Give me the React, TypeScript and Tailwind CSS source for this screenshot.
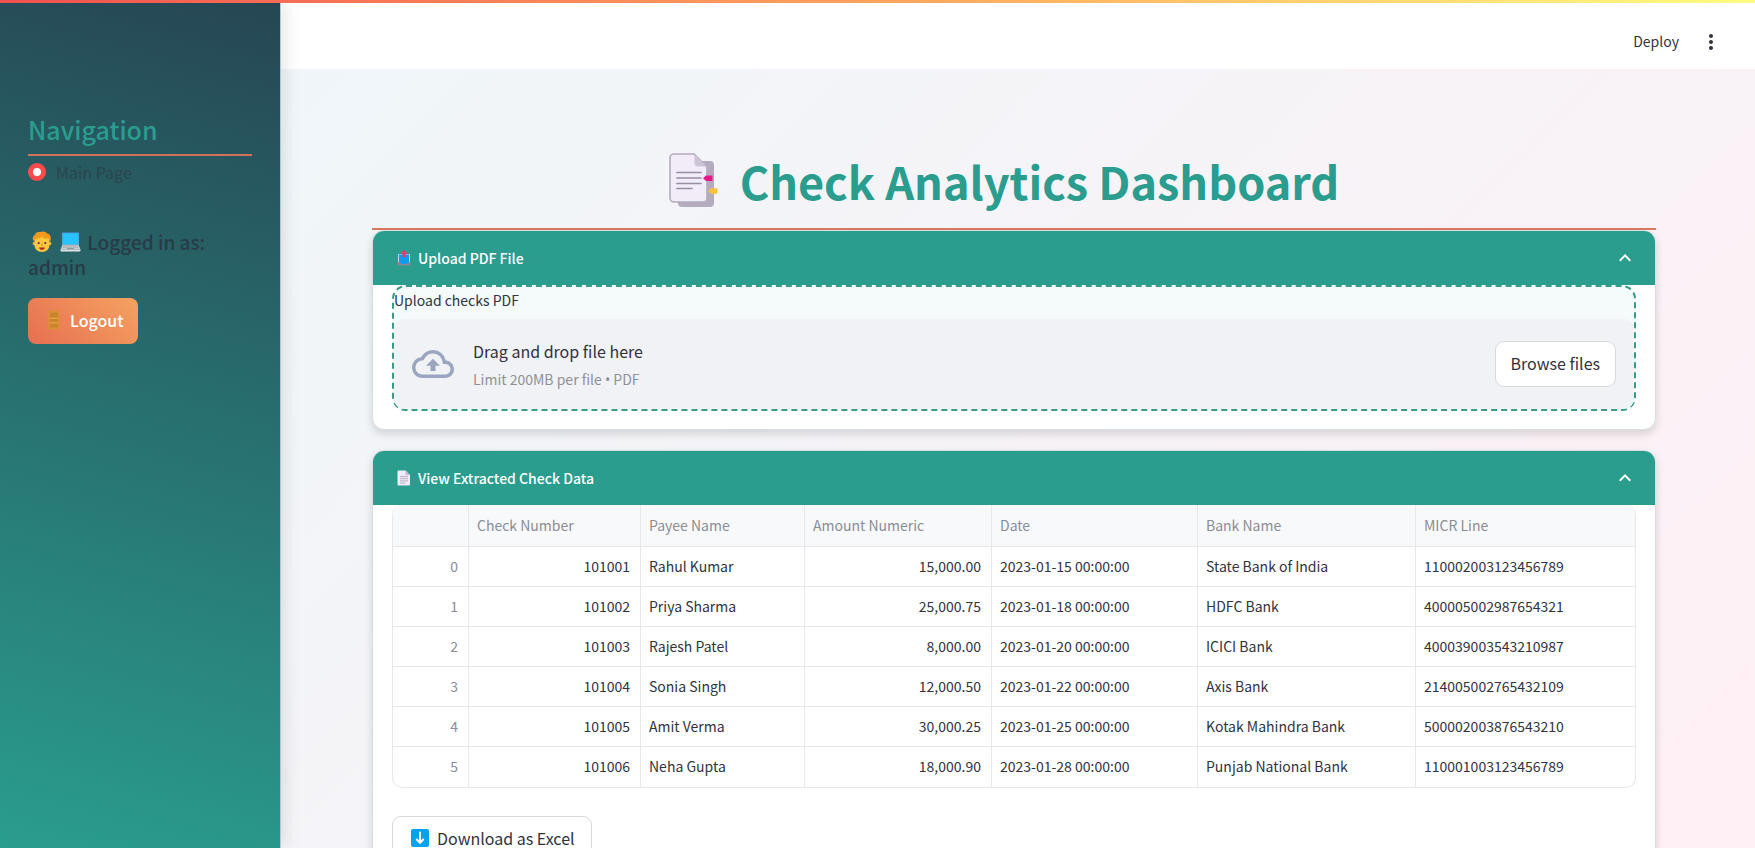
import { useState, type ReactNode } from 'react';
import { MdExpandLess, MdExpandMore, MdMoreVert, MdOutlineCloudUpload } from 'react-icons/md';

type Check = {
  number: string;
  payee: string;
  amount: string;
  date: string;
  bank: string;
  micr: string;
};

const checks: Check[] = [
  { number: '101001', payee: 'Rahul Kumar', amount: '15,000.00', date: '2023-01-15 00:00:00', bank: 'State Bank of India', micr: '110002003123456789' },
  { number: '101002', payee: 'Priya Sharma', amount: '25,000.75', date: '2023-01-18 00:00:00', bank: 'HDFC Bank', micr: '400005002987654321' },
  { number: '101003', payee: 'Rajesh Patel', amount: '8,000.00', date: '2023-01-20 00:00:00', bank: 'ICICI Bank', micr: '400039003543210987' },
  { number: '101004', payee: 'Sonia Singh', amount: '12,000.50', date: '2023-01-22 00:00:00', bank: 'Axis Bank', micr: '214005002765432109' },
  { number: '101005', payee: 'Amit Verma', amount: '30,000.25', date: '2023-01-25 00:00:00', bank: 'Kotak Mahindra Bank', micr: '500002003876543210' },
  { number: '101006', payee: 'Neha Gupta', amount: '18,000.90', date: '2023-01-28 00:00:00', bank: 'Punjab National Bank', micr: '110001003123456789' },
];

function BookmarkTabsIcon() {
  return (
    <svg viewBox="0 0 49 55" className="h-[55px] w-[49px]" aria-hidden="true">
      <rect x="9" y="8" width="36" height="46" rx="4" fill="#b4abbd" />
      <path d="M5 1h20l13 13v31a4 4 0 0 1-4 4H5a4 4 0 0 1-4-4V5a4 4 0 0 1 4-4z" fill="#f2ecf9" stroke="#b4abbd" strokeWidth="1.6" />
      <path d="M25.500 1.500 37.500 13.500H29a3.500 3.500 0 0 1-3.500-3.500z" fill="#cdc4d6" />
      <path d="M8 19.500h24M8 25h24M8 30.500h24M8 35.500h15" stroke="#998da3" strokeWidth="1.700" strokeLinecap="round" />
      <path d="M34 25.300l3-2.800h6.500v5.400H37z" fill="#e8178a" />
      <path d="M39 38l3-2.700h5.500a1 1 0 0 1 1 1v3.500a1 1 0 0 1-1 1H42z" fill="#f9c23c" />
    </svg>
  );
}

function OutboxIcon() {
  return (
    <svg viewBox="0 0 14 16" className="h-4 w-[14px]" aria-hidden="true">
      <path d="M1 4h12v10H1z" fill="#c3d3e6" />
      <path d="M.5 12h13v2.500a1 1 0 0 1-1 1h-11a1 1 0 0 1-1-1z" fill="#8c8795" />
      <path d="M2 4.500h10v7.500L9.500 14h-5L2 12z" fill="#0f9bf2" />
      <path d="M7 0 10.800 3.800H8.500v3.400h-3V3.800H3.200z" fill="#e83a6c" />
    </svg>
  );
}

function PageIcon() {
  return (
    <svg viewBox="0 0 14 16" className="h-4 w-[14px]" aria-hidden="true">
      <path d="M1.500.5h7L13 5v9.500a1 1 0 0 1-1 1H1.500a1 1 0 0 1-1-1v-13a1 1 0 0 1 1-1z" fill="#f1ebf8" />
      <path d="M8.500.5 13 5H9.500a1 1 0 0 1-1-1z" fill="#c3b9cd" />
      <path d="M3 6.500h8M3 8.700h8M3 10.900h8M3 13h5" stroke="#a99fb4" strokeWidth=".8" />
    </svg>
  );
}

function PersonIcon() {
  return (
    <svg viewBox="0 0 20 22" className="inline-block h-[22px] w-5 align-[-3px]" aria-hidden="true">
      <circle cx="2.300" cy="12.500" r="1.700" fill="#f2b12c" />
      <circle cx="17.700" cy="12.500" r="1.700" fill="#f2b12c" />
      <path d="M2.500 9a7.500 7.500 0 0 1 15 0v5c0 4-3.200 7-7.500 7s-7.500-3-7.500-7z" fill="#ffc83d" />
      <path d="M1.500 10C0 6.500 1.200 4.500 3 4 3 1.500 6 .5 8 1c3-1.200 6-.5 7.200 1.500 3 .2 4.300 4 3.300 7.500-.8-.3-1.500-1-1.700-2.500C13 8 10.500 7 9.500 5.500 8 7.500 5.500 8 3.300 7.800 3.200 9 2.500 9.800 1.500 10z" fill="#f39a1f" />
      <circle cx="6.700" cy="12" r="1.100" fill="#4b3a35" />
      <circle cx="13.300" cy="12" r="1.100" fill="#4b3a35" />
      <path d="M10 12.500v2.300" stroke="#e89b1c" strokeWidth="1.200" strokeLinecap="round" />
      <path d="M7 16.500h6c-.5 1.700-1.600 2.300-3 2.300s-2.500-.6-3-2.300z" fill="#b3261e" />
    </svg>
  );
}

function LaptopIcon() {
  return (
    <svg viewBox="0 0 22 22" className="mr-[2px] ml-2 inline-block h-[22px] w-[21px] align-[-3px]" aria-hidden="true">
      <rect x="2" y="1" width="18" height="13.500" rx="1" fill="#4a9fd8" />
      <rect x="3" y="2" width="16" height="11.500" fill="#26c3ff" />
      <path d="M2.500 14h17l2 5h-21z" fill="#c9cdd1" />
      <path d="M3.500 15h15M3 16.500h16" stroke="#8f969c" strokeWidth=".8" strokeDasharray="1.500 .6" />
      <path d="M7.500 18h7" stroke="#7f868c" strokeWidth="1" />
      <path d="M.5 19h21v1a1 1 0 0 1-1 1h-19a1 1 0 0 1-1-1z" fill="#dfe3e6" />
    </svg>
  );
}

function DoorIcon() {
  return (
    <svg viewBox="0 0 12 20" className="h-5 w-3" aria-hidden="true">
      <rect x=".5" y=".5" width="11" height="19" rx="1" fill="#dc8f35" />
      <path d="M2 2.500h8v5H2zM2 9h8v3H2zM2 13.500h8v4H2z" fill="#c9832e" />
      <path d="M2 8.300h8M2 12.800h8" stroke="#f0a544" strokeWidth="1" />
    </svg>
  );
}

function DownArrowIcon() {
  return (
    <svg viewBox="0 0 18 18" className="size-[18px]" aria-hidden="true">
      <rect width="18" height="18" rx="2" fill="#06a3ec" />
      <path d="M9 3.500v10M5.800 10.500 9 13.700 12.200 10.500" fill="none" stroke="#fff" strokeWidth="2" strokeLinecap="round" strokeLinejoin="round" />
    </svg>
  );
}

function Expander({ icon, title, children }: { icon: ReactNode; title: string; children: ReactNode }) {
  const [open, setOpen] = useState(true);
  return (
    <section className="rounded-xl border border-[#d5e0e2] bg-white shadow-[0_4px_8px_rgba(0,0,0,0.14)]">
      <button
        type="button"
        aria-expanded={open}
        onClick={() => setOpen(!open)}
        className="flex h-[54px] w-full items-center gap-[7px] rounded-t-[11px] bg-[#2a9d8f] pr-[18px] pb-px pl-6 text-left text-sm font-medium text-white"
      >
        {icon}
        <span className="grow">{title}</span>
        {open ? <MdExpandLess className="size-6" /> : <MdExpandMore className="size-6" />}
      </button>
      {open && <div className="px-[19px] pb-[18px]">{children}</div>}
    </section>
  );
}

const headCell = 'border-r border-b border-[#e6e8eb] px-2 pb-[2px] text-left font-normal last:border-r-0';
const cell = 'border-r border-b border-[#e6e8eb] px-2 pb-[2px] group-last:border-b-0 last:border-r-0';
const numberCell = 'border-r border-b border-[#e6e8eb] px-[10px] pb-[2px] text-right group-last:border-b-0';

export default function App() {
  return (
    <div className="relative flex h-screen overflow-hidden bg-white font-['Noto_Sans_CJK_SC','Noto_Sans',sans-serif] text-[#31333f]">
      <div className="absolute inset-x-0 top-0 z-20 h-[3px] bg-linear-to-r from-[#f05050] via-[#ffa35e] to-[#fffd80]" />

      <aside className="z-10 w-[281px] shrink-0 border-r border-[#b5c9d3] bg-[linear-gradient(195deg,#264653,#2a9d8f)] px-7 pt-[111px] shadow-[4px_0_16px_rgba(0,0,0,0.1)]">
        <h2 className="border-b-2 border-[#d0725a] pb-[7px] text-[25px] leading-9 font-medium text-[#2a9d8f]">Navigation</h2>
        <label className="mt-1 flex h-6 items-center gap-[10px] pb-px text-base text-[#2b4450]">
          <input
            type="radio"
            name="page"
            defaultChecked
            className="size-[18px] appearance-none rounded-full border-[5px] border-[#ff4b4b] bg-white"
          />
          Main Page
        </label>
        <h3 className="mt-[45px] pr-8 text-[19px] leading-[25px] font-medium text-[#293b48]">
          <span className="pl-1">
            <PersonIcon />
            <LaptopIcon />
          </span>{' '}
          Logged in as: admin
        </h3>
        <button
          type="button"
          className="mt-[19px] flex h-[46px] items-center gap-[10px] rounded-lg bg-[linear-gradient(45deg,#e76f51,#f4a261)] pr-[14px] pb-[2px] pl-5 text-base font-medium text-white"
        >
          <DoorIcon />
          Logout
        </button>
      </aside>

      <div className="flex min-w-0 grow flex-col">
        <header className="flex h-[69px] shrink-0 items-center justify-end gap-5 bg-white pt-[14px] pr-8">
          <button type="button" className="pb-[2px] text-sm">Deploy</button>
          <button type="button" aria-label="Menu">
            <MdMoreVert className="size-6" />
          </button>
        </header>

        <main className="grow overflow-y-auto bg-[linear-gradient(135deg,#eff6f9,#fff0f5)] pt-[66px] pr-[99px] pb-20 pl-[91px] [scrollbar-width:none]">
          <h1 className="flex items-center justify-center gap-[22px] border-b-2 border-[#dc7860] pr-5 pb-[2px] text-[45px] leading-[91px] font-bold text-[#2a9d8f]">
            <BookmarkTabsIcon />
            Check Analytics Dashboard
          </h1>

          <div className="flex flex-col gap-5">
            <Expander icon={<OutboxIcon />} title="Upload PDF File">
              <div className="rounded-[14px] border-2 border-dashed border-[#3a9b88] bg-[#f4fbfa]">
                <label htmlFor="checks-file" className="block h-8 text-sm leading-[26px]">Upload checks PDF</label>
                <div className="flex h-[90px] items-center rounded-[10px] bg-[#f0f2f6] px-[18px]">
                  <MdOutlineCloudUpload className="size-[42px] text-[#9aa5c0]" />
                  <div className="ml-[19px] grow pt-[2px]">
                    <p className="text-base leading-7">Drag and drop file here</p>
                    <p className="text-sm leading-7 text-[#8f9199]">
                      Limit 200MB per file <span className="font-['Noto_Sans']">•</span> PDF
                    </p>
                  </div>
                  <input id="checks-file" type="file" accept=".pdf" className="hidden" />
                  <button
                    type="button"
                    onClick={() => document.getElementById('checks-file')?.click()}
                    className="h-[46px] rounded-[9px] border border-[#d6d8dd] bg-white px-[15px] pb-[2px] text-base"
                  >
                    Browse files
                  </button>
                </div>
              </div>
            </Expander>

            <Expander icon={<PageIcon />} title="View Extracted Check Data">
              <div className="overflow-hidden rounded-[10px] border-x border-b border-[#e6e8eb]">
                <table className="w-full table-fixed border-separate border-spacing-0 text-sm">
                  <colgroup>
                    <col className="w-[76px]" />
                    <col className="w-[172px]" />
                    <col className="w-[164px]" />
                    <col className="w-[187px]" />
                    <col className="w-[206px]" />
                    <col className="w-[218px]" />
                    <col />
                  </colgroup>
                  <thead>
                    <tr className="h-[42px] bg-[#f8f9fb] text-[#8b8d96]">
                      <th className={headCell}></th>
                      <th className={headCell}>Check Number</th>
                      <th className={headCell}>Payee Name</th>
                      <th className={headCell}>Amount Numeric</th>
                      <th className={headCell}>Date</th>
                      <th className={headCell}>Bank Name</th>
                      <th className={headCell}>MICR Line</th>
                    </tr>
                  </thead>
                  <tbody>
                    {checks.map((check, index) => (
                      <tr key={check.number} className="group h-10">
                        <td className={`${numberCell} text-[#8b8d96]`}>{index}</td>
                        <td className={numberCell}>{check.number}</td>
                        <td className={cell}>{check.payee}</td>
                        <td className={numberCell}>{check.amount}</td>
                        <td className={cell}>{check.date}</td>
                        <td className={cell}>{check.bank}</td>
                        <td className={cell}>{check.micr}</td>
                      </tr>
                    ))}
                  </tbody>
                </table>
              </div>
              <button
                type="button"
                className="mt-7 flex h-[46px] items-center gap-2 rounded-[9px] border border-[#d6d8dd] bg-white pr-4 pb-[2px] pl-[18px] text-base"
              >
                <DownArrowIcon />
                Download as Excel
              </button>
            </Expander>
          </div>
        </main>
      </div>
    </div>
  );
}
